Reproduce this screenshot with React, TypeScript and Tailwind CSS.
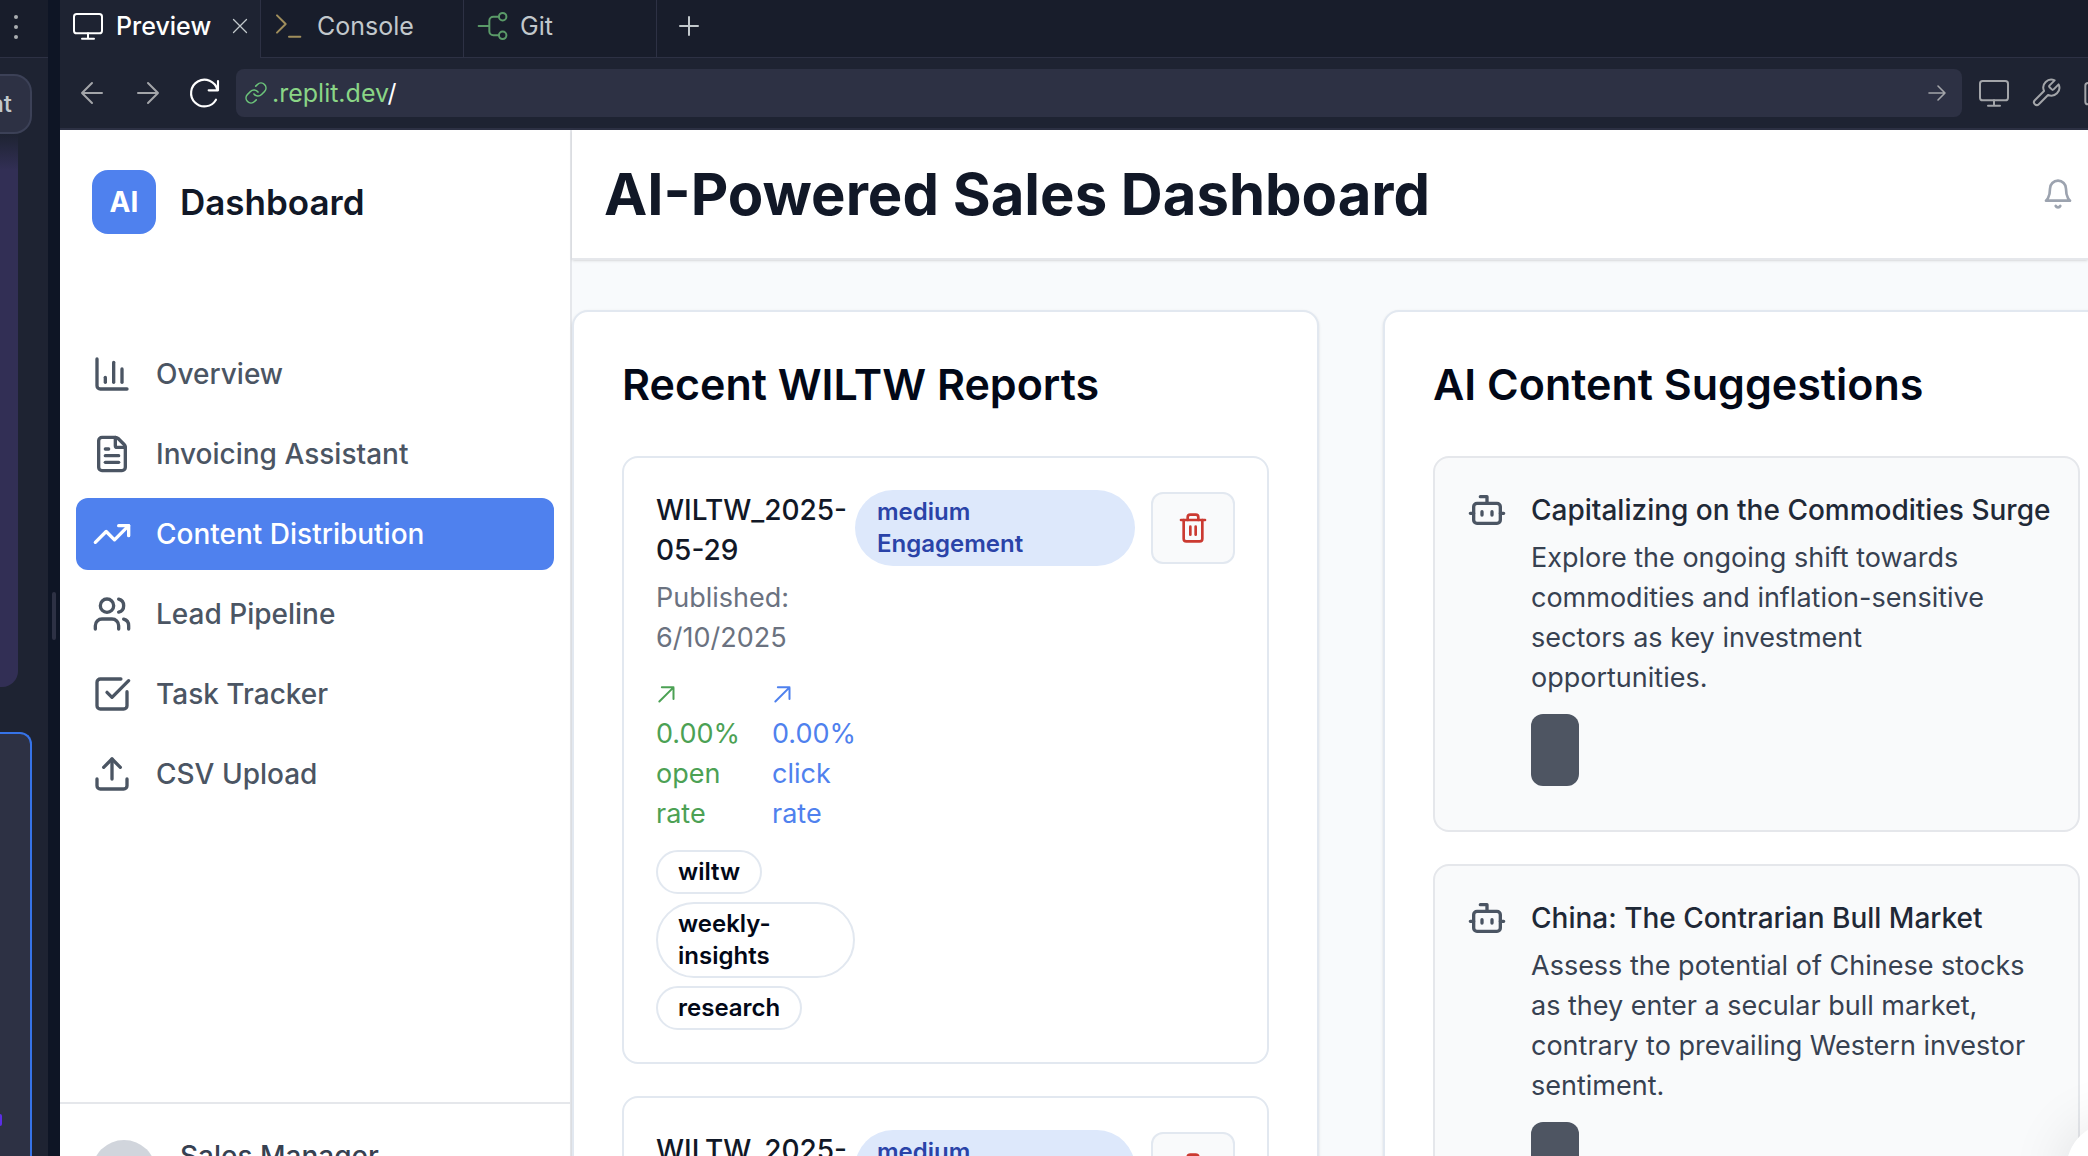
import React from "react";
import {
  SquareCheckBig,
  TrendingUp,
  Upload,
  Users,
  FileText,
  Trash2,
} from "lucide-react";

type IconProps = { className?: string; width?: number; children: React.ReactNode };

function Glyph({ className, width = 2, children }: IconProps) {
  return (
    <svg
      viewBox="0 0 24 24"
      fill="none"
      stroke="currentColor"
      strokeWidth={width}
      strokeLinecap="round"
      strokeLinejoin="round"
      className={className}
      aria-hidden="true"
    >
      {children}
    </svg>
  );
}

const ChartIcon = ({ className }: { className?: string }) => (
  <Glyph className={className}>
    <path d="M3 3v16a2 2 0 0 0 2 2h16" />
    <path d="M18 17V9" />
    <path d="M13 17V5" />
    <path d="M8 17v-3" />
  </Glyph>
);

const BotIcon = ({ className }: { className?: string }) => (
  <Glyph className={className}>
    <path d="M12 8V4H8" />
    <rect width="16" height="12" x="4" y="8" rx="2" />
    <path d="M2 14h2M20 14h2M15 13v2M9 13v2" />
  </Glyph>
);

const BellIcon = ({ className }: { className?: string }) => (
  <Glyph className={className}>
    <path d="M6 8a6 6 0 0 1 12 0c0 7 3 9 3 9H3s3-2 3-9" />
    <path d="M10.3 21a1.94 1.94 0 0 0 3.4 0" />
  </Glyph>
);

const MonitorIcon = ({ className }: { className?: string }) => (
  <Glyph className={className} width={1.5}>
    <rect x="1.5" y="3" width="21" height="14.5" rx="2" />
    <path d="M12 17.5v4M7.500 21.500h9" />
  </Glyph>
);

const TerminalIcon = ({ className }: { className?: string }) => (
  <Glyph className={className} width={1.5}>
    <path d="M3 4l6.500 6.500L3 17M12 20h8.500" />
  </Glyph>
);

const GitIcon = ({ className }: { className?: string }) => (
  <Glyph className={className} width={1.5}>
    <circle cx="20" cy="5" r="2.800" />
    <circle cx="20" cy="19" r="2.800" />
    <path d="M2 12h8M17 5h-4a3 3 0 0 0-3 3v8a3 3 0 0 0 3 3h4" />
  </Glyph>
);

const WrenchIcon = ({ className }: { className?: string }) => (
  <Glyph className={className} width={1.5}>
    <path d="M14.700 6.300a1 1 0 0 0 0 1.400l1.600 1.600a1 1 0 0 0 1.400 0l3.770-3.770a6 6 0 0 1-7.940 7.940l-6.910 6.910a2.120 2.120 0 0 1-3-3l6.910-6.910a6 6 0 0 1 7.940-7.940l-3.760 3.760z" />
  </Glyph>
);

const navItems = [
  { label: "Overview", Icon: ChartIcon },
  { label: "Invoicing Assistant", Icon: FileText },
  { label: "Content Distribution", Icon: TrendingUp, active: true },
  { label: "Lead Pipeline", Icon: Users },
  { label: "Task Tracker", Icon: SquareCheckBig },
  { label: "CSV Upload", Icon: Upload },
];

const suggestions = [
  {
    title: "Capitalizing on the Commodities Surge",
    text: "Explore the ongoing shift towards commodities and inflation-sensitive sectors as key investment opportunities.",
  },
  {
    title: "China: The Contrarian Bull Market",
    text: "Assess the potential of Chinese stocks as they enter a secular bull market, contrary to prevailing Western investor sentiment.",
  },
];

function Tag({ children }: { children: React.ReactNode }) {
  return (
    <span className="rounded-full border-2 border-slate-200 px-5 py-1 text-[24px] leading-8 font-semibold text-[#020817]">
      {children}
    </span>
  );
}

function RateArrow() {
  return (
    <span className="flex h-10 items-center">
      <Glyph className="size-5" width={2.4}>
        <path d="M4 21 21 4M7 4h14v14" />
      </Glyph>
    </span>
  );
}

function Report() {
  return (
    <article className="flex items-start rounded-2xl border-2 border-slate-200 p-8">
      <div className="w-[199px] shrink-0">
        <h3 className="font-medium text-[#111827]">WILTW_2025-05-29</h3>
        <div className="text-[27px]">
          <p className="mt-2 text-[#6b7280]">
            Published:
            <br />
            6/10/2025
          </p>
          <div className="mt-4 flex gap-8">
            <p className="w-[84px] text-[#4ca154]">
              <RateArrow />
              0.00% open rate
            </p>
            <p className="w-[84px] text-[#4f81ee]">
              <RateArrow />
              0.00% click rate
            </p>
          </div>
        </div>
        <div className="mt-4 flex flex-col items-start gap-2">
          <Tag>wiltw</Tag>
          <Tag>weekly-insights</Tag>
          <Tag>research</Tag>
        </div>
      </div>
      <div className="flex flex-1 items-center gap-4">
        <span className="flex-1 rounded-[38px] bg-[#dde8fb] px-[22px] py-[6px] text-[24px] leading-8 font-semibold text-[#2a43a8]">
          medium
          <br />
          Engagement
        </span>
        <button
          type="button"
          aria-label="Delete report"
          className="flex h-[72px] w-[84px] items-center justify-center rounded-xl border-2 border-slate-200 bg-gray-50 text-[#cb3a31]"
        >
          <Trash2 className="size-8" />
        </button>
      </div>
    </article>
  );
}

export default function App() {
  return (
    <div className="flex h-screen overflow-hidden bg-[#0e1525] font-['Inter',sans-serif] text-[28px] leading-10">
      {/* Chat panel edge */}
      <aside className="flex w-12 shrink-0 flex-col bg-[#1e2332]">
        <div className="flex h-[58px] shrink-0 items-center border-b border-[#2d3144] bg-[#181d2b] pl-[14px]">
          <button type="button" aria-label="More options" className="flex h-7 w-2 flex-col justify-between pb-1 text-[#a9adb0]">
            <i className="size-1 rounded-full bg-current" />
            <i className="size-1 rounded-full bg-current" />
            <i className="size-1 rounded-full bg-current" />
          </button>
        </div>
        <button
          type="button"
          className="mt-4 flex h-[60px] w-8 shrink-0 items-center justify-end rounded-r-[18px] border-2 border-l-0 border-[#3c4157] bg-[#2d3144] pr-[18px] text-[24px] font-medium text-[#c2c8cc]"
        >
          at
        </button>
        <div className="h-[553px] w-[18px] shrink-0 rounded-br-2xl bg-linear-to-b from-[#1e2332] to-[#322f55] to-[36px]" />
        <div className="mt-[45px] flex w-8 flex-1 items-end rounded-tr-xl border-2 border-b-0 border-l-0 border-[#3673e8] bg-[#2d3144] pb-[30px]">
          <i className="h-3 w-[2px] rounded-r-full bg-[#5b2ee5]" />
        </div>
      </aside>
      <div className="flex w-3 shrink-0 items-center justify-center pt-[76px]">
        <i className="h-12 w-1 rounded-full bg-[#2d3144]" />
      </div>

      <div className="flex min-w-0 flex-1 flex-col">
        {/* Workspace tabs */}
        <div className="flex h-[58px] shrink-0 bg-[#181d2b] text-[25px] text-[#c2c8cc]">
          <div className="flex w-[201px] items-center border-r border-[#2d3144] bg-[#1e2332] pb-[6px] pl-3">
            <MonitorIcon className="size-8 text-white" />
            <button type="button" className="ml-3 font-medium text-white">Preview</button>
            <button type="button" aria-label="Close tab" className="mr-2 ml-auto">
              <Glyph className="size-6" width={1.3}>
                <path d="M5.500 5.500l13 13M18.500 5.500l-13 13" />
              </Glyph>
            </button>
          </div>
          <button type="button" className="flex w-[203px] items-center gap-3 border-r border-b border-[#2d3144] pb-[6px] pl-3">
            <TerminalIcon className="size-8 text-[#a08e5c]" />
            Console
          </button>
          <button type="button" className="flex w-[193px] items-center gap-3 border-r border-b border-[#2d3144] pb-[6px] pl-3">
            <GitIcon className="size-8 text-[#5a9a68]" />
            Git
          </button>
          <div className="flex flex-1 items-center border-b border-[#2d3144] pb-[6px] pl-5">
            <button type="button" aria-label="New tab">
              <Glyph className="size-6" width={2}>
                <path d="M12 3v18M3 12h18" />
              </Glyph>
            </button>
          </div>
        </div>

        {/* Address bar */}
        <div className="-mr-[42px] flex h-[72px] shrink-0 items-center border-b-2 border-[#2d3144] bg-[#1e2332] text-[#a3a5a9]">
          <button type="button" aria-label="Back" className="ml-4">
            <Glyph className="size-8" width={1.5}>
              <path d="M19.500 12H4.500M12 4.500 4.500 12l7.500 7.500" />
            </Glyph>
          </button>
          <button type="button" aria-label="Forward" className="ml-6">
            <Glyph className="size-8" width={1.5}>
              <path d="M4.500 12h15M12 4.500l7.500 7.500-7.500 7.500" />
            </Glyph>
          </button>
          <button type="button" aria-label="Reload" className="ml-6 text-white">
            <Glyph className="size-8" width={1.6}>
              <path d="M22.500 3v7h-7M22 9.500A10 10 0 1 0 21 17" />
            </Glyph>
          </button>
          <div className="ml-4 flex h-12 flex-1 items-center rounded-lg bg-[#2d3144] px-2">
            <Glyph className="size-6 text-[#6cc47a]" width={1.6}>
              <path d="M10 13a5 5 0 0 0 7.540.54l3-3a5 5 0 0 0-7.070-7.070l-1.720 1.710" />
              <path d="M14 11a5 5 0 0 0-7.540-.54l-3 3a5 5 0 0 0 7.070 7.070l1.710-1.710" />
            </Glyph>
            <span className="ml-1 flex-1 text-[25px] text-[#8ad586]">
              .replit.dev<span className="text-white">/</span>
            </span>
            <button type="button" aria-label="Open address" className="mr-1">
              <Glyph className="size-6" width={1.6}>
                <path d="M3 12h16M12 5l7 7-7 7" />
              </Glyph>
            </button>
          </div>
          <button type="button" aria-label="Device size" className="ml-4">
            <MonitorIcon className="size-8" />
          </button>
          <button type="button" aria-label="Developer tools" className="ml-5">
            <WrenchIcon className="size-8" />
          </button>
          <button type="button" aria-label="Open in new window" className="mr-4 ml-5">
            <Glyph className="size-8" width={1.5}>
              <rect x="2.500" y="4.500" width="16" height="16" rx="2" />
            </Glyph>
          </button>
        </div>

        {/* Previewed app */}
        <div className="flex min-h-0 flex-1 bg-slate-50">
          <nav className="flex w-[512px] shrink-0 flex-col border-r-2 border-gray-200 bg-white">
            <div className="flex items-center gap-6 px-8 pt-10">
              <span className="flex size-16 items-center justify-center rounded-2xl bg-[#4f81ee] font-bold text-white">AI</span>
              <span className="text-[35px] font-semibold text-[#111827]">Dashboard</span>
            </div>
            <ul className="mt-[104px] flex flex-col gap-2 px-4">
              {navItems.map(({ label, Icon, active }) => (
                <li key={label}>
                  <a
                    href="#"
                    className={
                      active
                        ? "flex h-[72px] items-center gap-6 rounded-xl bg-[#4f81ee] px-4 font-medium text-white"
                        : "flex h-[72px] items-center gap-6 rounded-xl px-4 font-medium text-[#4b5563]"
                    }
                  >
                    <Icon className="size-10" />
                    {label}
                  </a>
                </li>
              ))}
            </ul>
            <div className="mt-auto -mb-14 flex items-start gap-6 border-t-2 border-gray-200 px-8 pt-8">
              <span className="mt-1 size-16 rounded-full bg-gray-300" />
              <div className="h-[76px] font-medium text-[#374151]">Sales Manager</div>
            </div>
          </nav>

          <main className="min-w-0 flex-1">
            <header className="flex h-[130px] items-center justify-between border-b-2 border-gray-200 bg-white pr-[14px] pl-8 shadow">
              <h1 className="text-[58px] leading-[72px] font-bold text-[#111827]">AI-Powered Sales Dashboard</h1>
              <button type="button" aria-label="Notifications" className="text-[#9ca3af]">
                <BellIcon className="size-8" />
              </button>
            </header>
            <div className="mt-[50px] -mr-[42px] grid grid-cols-2 gap-16">
              <section className="rounded-2xl border-2 border-slate-200 bg-white p-12 shadow-sm">
                <h2 className="text-[43px] leading-[48px] font-semibold text-[#020817]">Recent WILTW Reports</h2>
                <div className="mt-12 flex flex-col gap-8">
                  <Report />
                  <Report />
                </div>
              </section>
              <section className="rounded-2xl border-2 border-slate-200 bg-white p-12 shadow-sm">
                <h2 className="text-[43px] leading-[48px] font-semibold text-[#020817]">AI Content Suggestions</h2>
                <div className="mt-12 flex flex-col gap-8">
                  {suggestions.map(({ title, text }) => (
                    <article key={title} className="flex items-start gap-6 rounded-2xl border-2 border-gray-200 bg-gray-50 p-8">
                      <BotIcon className="size-10 shrink-0 text-[#4b5563]" />
                      <div>
                        <h3 className="font-medium whitespace-nowrap text-[#1f2937]">{title}</h3>
                        <p className="mt-2 pr-3 text-[27px] text-[#374151]">{text}</p>
                        <button type="button" aria-label="Use suggestion" className="mt-4 mb-3 block h-[72px] w-12 rounded-xl bg-[#4e5562]" />
                      </div>
                    </article>
                  ))}
                </div>
              </section>
            </div>
          </main>
        </div>
      </div>

      <button
        type="button"
        aria-label="Open assistant"
        className="fixed -right-[74px] -bottom-[62px] size-24 rounded-full bg-white shadow-[0_4px_60px_rgba(0,0,0,0.12)]"
      />
    </div>
  );
}
